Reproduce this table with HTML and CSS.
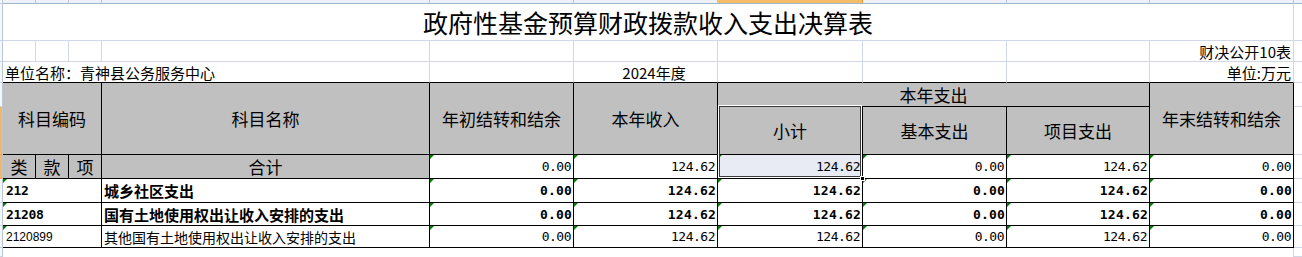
FILE: index.html
```html
<!DOCTYPE html>
<html lang="zh-CN">
<head>
<meta charset="utf-8">
<title>政府性基金预算财政拨款收入支出决算表</title>
<link rel="stylesheet" href="styles.css">
</head>
<body>
<div class="sheet">
  <!-- row 0: column header remnant -->
  <div class="c hdr c0"></div>
  <div class="c hdr"></div><div class="c hdr"></div><div class="c hdr"></div><div class="c hdr"></div>
  <div class="c hdr"></div><div class="c hdr"></div><div class="c hdr on"></div><div class="c hdr"></div>
  <div class="c hdr"></div><div class="c hdr"></div><div class="c hdr"></div>

  <!-- row 1: title -->
  <div class="c c0"></div>
  <div class="c title span10">政府性基金预算财政拨款收入支出决算表</div>
  <div class="c"></div>

  <!-- row 2 -->
  <div class="c c0"></div>
  <div class="c"></div><div class="c"></div><div class="c"></div><div class="c"></div><div class="c"></div>
  <div class="c"></div><div class="c"></div><div class="c"></div><div class="c"></div>
  <div class="c right">财决公开10表</div>
  <div class="c"></div>

  <!-- row 3 -->
  <div class="c c0"></div>
  <div class="c top left span4">单位名称：青神县公务服务中心</div>
  <div class="c top"></div>
  <div class="c top year">2024年度</div>
  <div class="c top"></div><div class="c top"></div><div class="c top"></div>
  <div class="c top right">单位:万元</div>
  <div class="c"></div>

  <!-- row 4 -->
  <div class="c c0"></div>
  <div class="c t h span3 rows2">科目编码</div>
  <div class="c t h rows2">科目名称</div>
  <div class="c t h rows2">年初结转和结余</div>
  <div class="c t h rows2">本年收入</div>
  <div class="c t h span3">本年支出</div>
  <div class="c t h rows2">年末结转和结余</div>
  <div class="c"></div>

  <!-- row 5 -->
  <div class="c c0 hl"></div>
  <div class="c t h">小计</div>
  <div class="c t h">基本支出</div>
  <div class="c t h">项目支出</div>
  <div class="c"></div>

  <!-- row 6: 合计 -->
  <div class="c c0 hl"></div>
  <div class="c t h">类</div>
  <div class="c t h">款</div>
  <div class="c t h">项</div>
  <div class="c t h">合计</div>
  <div class="c t n tri">0.00</div>
  <div class="c t n tri">124.62</div>
  <div class="c t n tri sel">124.62</div>
  <div class="c t n tri">0.00</div>
  <div class="c t n tri">124.62</div>
  <div class="c t n tri">0.00</div>
  <div class="c"></div>

  <!-- row 7 -->
  <div class="c c0"></div>
  <div class="c t code b tri span3">212</div>
  <div class="c t name b">城乡社区支出</div>
  <div class="c t n b tri">0.00</div>
  <div class="c t n b tri">124.62</div>
  <div class="c t n b tri">124.62</div>
  <div class="c t n b tri">0.00</div>
  <div class="c t n b tri">124.62</div>
  <div class="c t n b tri">0.00</div>
  <div class="c"></div>

  <!-- row 8 -->
  <div class="c c0"></div>
  <div class="c t code b tri span3">21208</div>
  <div class="c t name b">国有土地使用权出让收入安排的支出</div>
  <div class="c t n b tri">0.00</div>
  <div class="c t n b tri">124.62</div>
  <div class="c t n b tri">124.62</div>
  <div class="c t n b tri">0.00</div>
  <div class="c t n b tri">124.62</div>
  <div class="c t n b tri">0.00</div>
  <div class="c"></div>

  <!-- row 9 -->
  <div class="c c0"></div>
  <div class="c t code sm tri span3">2120899</div>
  <div class="c t name sm">其他国有土地使用权出让收入安排的支出</div>
  <div class="c t n tri">0.00</div>
  <div class="c t n tri">124.62</div>
  <div class="c t n tri">124.62</div>
  <div class="c t n tri">0.00</div>
  <div class="c t n tri">124.62</div>
  <div class="c t n tri">0.00</div>
  <div class="c"></div>

  <!-- row 10 -->
  <div class="c c0"></div>
  <div class="c span10 nob"></div>
  <div class="c"></div>

  <div class="selection"></div>
  <div class="handle"></div>
</div>
</body>
</html>
```

FILE: styles.css
```css
* {
  box-sizing: border-box;
}

html,
body {
  margin: 0;
  padding: 0;
  background: #ffffff;
  overflow: hidden;
}

body {
  width: 1302px;
  height: 257px;
  font-family: "Noto Sans CJK SC", "Noto Sans", sans-serif;
  color: #000000;
}

.sheet {
  position: relative;
  display: grid;
  grid-template-columns: 3px 33px 33px 33px 328px 144px 144px 145px 144px 143px 144px 60px;
  grid-template-rows: 4px 37px 21px 21px 24px 48px 24px 24px 23px 22px 9px;
  overflow: hidden;
}

.c {
  position: relative;
  display: flex;
  align-items: center;
  white-space: nowrap;
  overflow: hidden;
  border-right: 1px solid #d0d7e5;
  border-bottom: 1px solid #d0d7e5;
  font-size: 15px;
  line-height: 1;
}

/* row & column header remnants */
.hdr {
  background: #eef2f8;
  border-right-color: #b7c6d9;
  border-bottom-color: #9eb6ce;
}

.hdr.on {
  background: #f6bd68;
  border-right-color: #f29536;
}

.c0 {
  background: #f4f7fb;
  border-right-color: #b7c6d9;
  border-bottom-color: #c9d5e4;
}

.c0.hl {
  background: #f6b662;
  border-bottom-color: #f0a550;
}

.span10 {
  grid-column: span 10;
}

.span4 {
  grid-column: span 4;
}

.span3 {
  grid-column: span 3;
}

.rows2 {
  grid-row: span 2;
}

.nob {
  border-bottom: none;
}

.title {
  justify-content: center;
  font-size: 25px;
}

.right {
  justify-content: flex-end;
  padding-right: 2px;
}

.left {
  padding-left: 2px;
}

.year {
  justify-content: center;
  padding-left: 17px;
}

.top {
  border-bottom-color: #000000;
}

/* table cells */
.t {
  border-right-color: #000000;
  border-bottom-color: #000000;
}

.h {
  background: #c0c0c0;
  justify-content: center;
  font-size: 17px;
}

.n {
  justify-content: flex-end;
  padding-right: 2px;
  font-family: "DejaVu Sans Mono", "Liberation Mono", monospace;
  font-size: 13px;
  letter-spacing: -0.5px;
}

.n.b {
  font-weight: bold;
  letter-spacing: 0.2px;
  padding-right: 1px;
}

.code {
  padding-left: 3px;
  font-family: "DejaVu Sans Mono", "Liberation Mono", monospace;
  font-size: 13px;
}

.code.b {
  font-weight: bold;
  letter-spacing: -0.3px;
}

.code.sm {
  font-family: "Liberation Sans", Arial, sans-serif;
  font-size: 12px;
}

.name {
  padding-left: 2px;
  font-size: 15px;
}

.name.b {
  font-weight: bold;
}

.name.sm {
  font-size: 14px;
}

.sel {
  background: #e8ebf4;
}

.tri::before {
  content: "";
  position: absolute;
  left: 0;
  top: 0;
  border-top: 4px solid #008000;
  border-right: 4px solid transparent;
}

/* active selection frame over the 小计 column */
.selection {
  position: absolute;
  left: 718px;
  top: 105px;
  width: 144px;
  height: 73px;
  border: 1px solid #ffffff;
  box-shadow: inset 0 0 0 1px #3a3a3a;
  pointer-events: none;
}

.handle {
  position: absolute;
  left: 860px;
  top: 176px;
  width: 5px;
  height: 5px;
  background: #000000;
  border: 1px solid #ffffff;
}
```
